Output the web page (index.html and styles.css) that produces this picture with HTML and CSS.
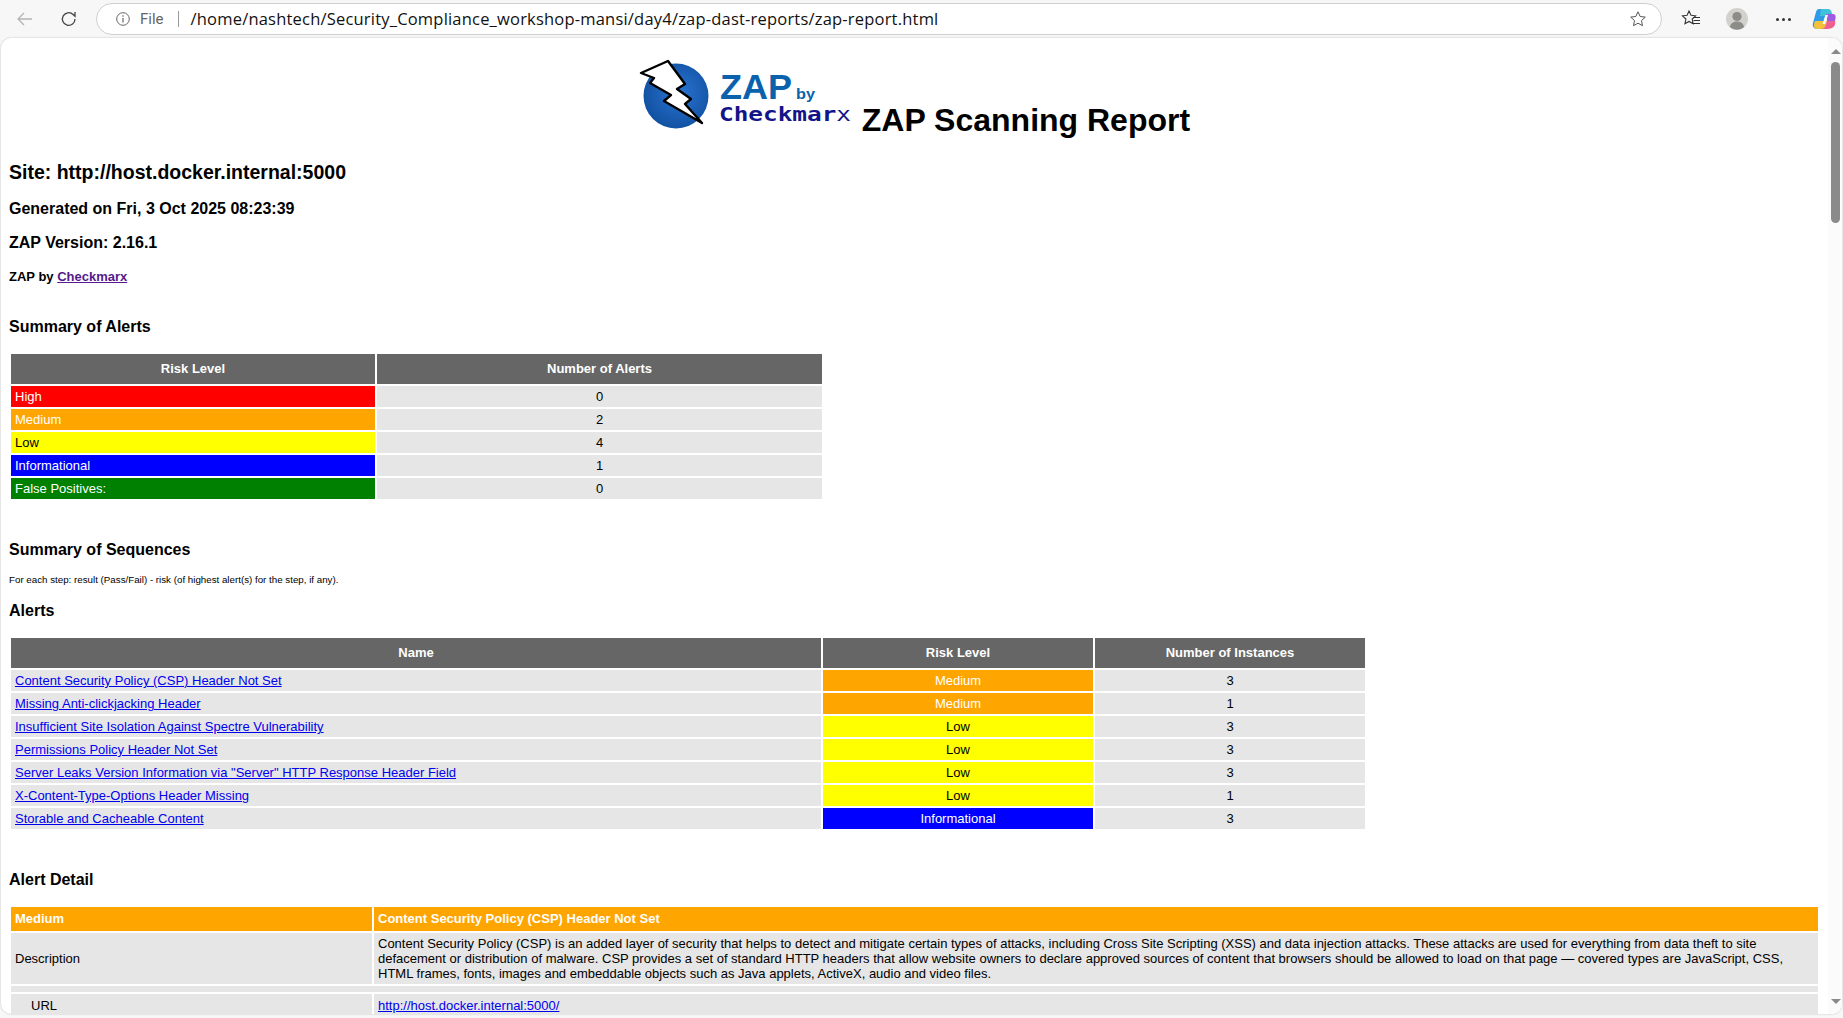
FILE: index.html
```html
<!DOCTYPE html>
<html>
<head>
	<title>ZAP Scanning Report</title>
	<link rel="stylesheet" href="styles.css">
</head>
<body>
<div class="toolbar">
  <svg class="nav-icon back" width="20" height="20" viewBox="0 0 20 20"><path d="M17 10H3M9 4l-6 6 6 6" fill="none" stroke="#b4b4b4" stroke-width="1.3"/></svg>
  <svg class="nav-icon reload" width="20" height="20" viewBox="0 0 20 20"><path d="M16 10a6.3 6.3 0 1 1-1.9-4.5L16 7.300V3" fill="none" stroke="#444" stroke-width="1.3"/></svg>
  <div class="omnibox">
    <svg width="16" height="16" viewBox="0 0 16 16"><circle cx="8" cy="8" r="6.300" fill="none" stroke="#666" stroke-width="1"/><path d="M8 7v4.500M8 4.300v1.400" stroke="#666" stroke-width="1.200"/></svg>
    <span class="scheme">File</span>
    <span class="sep"></span>
    <span class="url">/home/nashtech/Security_Compliance_workshop-mansi/day4/zap-dast-reports/zap-report.html</span>
    <svg class="star" width="18" height="18" viewBox="0 0 18 18"><path d="M9 1.800l2.200 4.700 5.100.6-3.800 3.500 1 5.100L9 13.200l-4.500 2.500 1-5.100L1.700 7.100l5.100-.6z" fill="none" stroke="#555" stroke-width="1"/></svg>
  </div>
  <svg class="tool fav" width="20" height="20" viewBox="0 0 20 20"><path d="M8 2l2 4.300 4.600.5-3.400 3.200.9 4.700L8 12.400l-4 2.300.900-4.700L1.500 6.800l4.600-.5z" fill="none" stroke="#333" stroke-width="1.100"/><path d="M12 8.500h7M12.500 11.500h6.500M11 14.500h8" stroke="#333" stroke-width="1"/></svg>
  <svg class="tool avatar" width="22" height="22" viewBox="0 0 22 22"><circle cx="11" cy="11" r="11" fill="#d2d1cc"/><circle cx="11" cy="8.500" r="4.600" fill="#8c8c88"/><path d="M3.800 19c1-4 3.800-5.600 7.200-5.600s6.200 1.600 7.200 5.600a11 11 0 0 1-14.400 0z" fill="#8c8c88"/></svg>
  <div class="dots"><i></i><i></i><i></i></div>
  <svg class="tool copilot" width="24" height="24" viewBox="0 0 24 24">
    <path d="M7 2h8l-5 20H5c-3 0-5-3-4-6l3-11c.500-2 1.500-3 3-3z" fill="#2f9be8"/>
    <path d="M9 2h7c2 0 3 1 3.500 3L21 9H8z" fill="#3fc1d8"/>
    <path d="M3 14h12l-3 8H5c-3 0-4-3-2-8z" fill="#f2c13a"/>
    <path d="M15 22H9c3 0 4-2 5-5l1-3h8c1 4-1 8-8 8z" fill="#ef5f8f"/>
    <path d="M14 7h7c3 0 3 3 2 7h-8z" fill="#a05ce0"/>
    <path d="M13.500 8h2.500l-3 9h-2.500z" fill="#fff"/>
  </svg>
</div>

<div class="viewport">
  <div class="page">
    <h1 class="title">
      <svg class="logo" width="214" height="74" viewBox="19 8 214 74">
        <defs>
          <radialGradient id="ball" cx="55%" cy="45%" r="60%">
            <stop offset="0" stop-color="#2b74d2"/>
            <stop offset="1" stop-color="#0f4f9e"/>
          </radialGradient>
        </defs>
        <circle cx="56" cy="47" r="32.500" fill="url(#ball)"/>
        <path d="M21 24L48 12l17 23-8 5 14 10-6 5 17 19-38-22 7-6-21-12 4-5z" fill="#fff" stroke="#000" stroke-width="2.400" stroke-linejoin="round"/>
        <text class="logo-zap" x="100" y="49.500" textLength="72" lengthAdjust="spacingAndGlyphs">ZAP</text>
        <text class="logo-by" x="176" y="50" textLength="19" lengthAdjust="spacingAndGlyphs">by</text>
        <text class="logo-cx" x="99" y="72" textLength="132" lengthAdjust="spacingAndGlyphs">Checkmar<tspan class="logo-x">x</tspan></text>
      </svg>
      <span>ZAP Scanning Report</span>
    </h1>

    <h2 class="site">Site: http://host.docker.internal:5000</h2>
    <h3 class="meta">Generated on Fri, 3 Oct 2025 08:23:39</h3>
    <h3 class="meta">ZAP Version: 2.16.1</h3>
    <h4 class="by">ZAP by <a class="visited" href="#">Checkmarx</a></h4>

    <h3 class="section first">Summary of Alerts</h3>
    <table class="grid summary">
      <tr><th class="col-risk">Risk Level</th><th>Number of Alerts</th></tr>
      <tr><td class="risk-high">High</td><td class="c">0</td></tr>
      <tr><td class="risk-medium">Medium</td><td class="c">2</td></tr>
      <tr><td class="risk-low">Low</td><td class="c">4</td></tr>
      <tr><td class="risk-info">Informational</td><td class="c">1</td></tr>
      <tr><td class="risk-fp">False Positives:</td><td class="c">0</td></tr>
    </table>

    <h3 class="section seq">Summary of Sequences</h3>
    <p class="note">For each step: result (Pass/Fail) - risk (of highest alert(s) for the step, if any).</p>
    <h3 class="section alerts-head">Alerts</h3>
    <table class="grid alerts">
      <tr><th class="col-name">Name</th><th class="col-level">Risk Level</th><th>Number of Instances</th></tr>
      <tr><td><a href="#">Content Security Policy (CSP) Header Not Set</a></td><td class="c risk-medium">Medium</td><td class="c">3</td></tr>
      <tr><td><a href="#">Missing Anti-clickjacking Header</a></td><td class="c risk-medium">Medium</td><td class="c">1</td></tr>
      <tr><td><a href="#">Insufficient Site Isolation Against Spectre Vulnerability</a></td><td class="c risk-low">Low</td><td class="c">3</td></tr>
      <tr><td><a href="#">Permissions Policy Header Not Set</a></td><td class="c risk-low">Low</td><td class="c">3</td></tr>
      <tr><td><a href="#">Server Leaks Version Information via "Server" HTTP Response Header Field</a></td><td class="c risk-low">Low</td><td class="c">3</td></tr>
      <tr><td><a href="#">X-Content-Type-Options Header Missing</a></td><td class="c risk-low">Low</td><td class="c">1</td></tr>
      <tr><td><a href="#">Storable and Cacheable Content</a></td><td class="c risk-info">Informational</td><td class="c">3</td></tr>
    </table>

    <h3 class="section detail-head">Alert Detail</h3>
    <table class="grid detail">
      <tr class="detail-top"><td class="col-label risk-medium">Medium</td><td class="risk-medium">Content Security Policy (CSP) Header Not Set</td></tr>
      <tr>
        <td>Description</td>
        <td class="long">Content Security Policy (CSP) is an added layer of security that helps to detect and mitigate certain types of attacks, including Cross Site Scripting (XSS) and data injection attacks. These attacks are used for everything from data theft to site defacement or distribution of malware. CSP provides a set of standard HTTP headers that allow website owners to declare approved sources of content that browsers should be allowed to load on that page — covered types are JavaScript, CSS, HTML frames, fonts, images and embeddable objects such as Java applets, ActiveX, audio and video files.</td>
      </tr>
      <tr class="spacer"><td colspan="2"></td></tr>
      <tr class="url-row"><td class="indent">URL</td><td><a href="#">http://host.docker.internal:5000/</a></td></tr>
    </table>
  </div>
  <div class="scrollbar">
    <span class="arrow up"></span>
    <span class="thumb"></span>
    <span class="arrow down"></span>
  </div>
</div>
</body>
</html>
```

FILE: styles.css
```css
html, body {
  height: 100%;
  margin: 0;
  overflow: hidden;
}

body {
  display: flex;
  flex-direction: column;
  background: #f7f7f7;
  color: #000;
  font-family: "Liberation Sans", Arial, sans-serif;
}

/* browser bar */
.toolbar {
  display: flex;
  align-items: center;
  height: 38px;
  flex: none;
}

.nav-icon { flex: none; }
.back { margin-left: 15px; }
.reload { margin-left: 24px; margin-right: 17px; }

.omnibox {
  display: flex;
  align-items: center;
  box-sizing: border-box;
  width: 1566px;
  height: 32px;
  margin-top: -1px;
  padding: 0 14px 0 18px;
  background: #fff;
  border: 1px solid #cfcfcf;
  border-radius: 16px;
}

.scheme {
  margin-left: 9px;
  font: 15px "Roboto", sans-serif;
  color: #666;
}

.sep {
  width: 1px;
  height: 16px;
  margin: 0 12px 0 14px;
  background: #999;
}

.url {
  font: 16.500px "Open Sans", sans-serif;
  letter-spacing: .2px;
  color: #111;
  white-space: nowrap;
}

.star { margin-left: auto; }

.tool { flex: none; }
.fav { margin-left: 19px; }
.avatar { margin-left: 25px; }

.dots {
  display: flex;
  gap: 3px;
  margin-left: 28px;
}

.dots i {
  width: 3px;
  height: 3px;
  border-radius: 50%;
  background: #333;
}

.copilot { margin-left: 21px; }

/* page area */
.viewport {
  display: flex;
  flex: none;
  height: 976px;
  margin: 0 1px 0 1px;
  background: #fff;
  border-radius: 10px;
  box-shadow: 0 0 2px rgba(0, 0, 0, .25);
  overflow: hidden;
}

.page {
  flex: 1;
  min-width: 0;
  padding: 0 8px;
}

.scrollbar {
  position: relative;
  flex: none;
  width: 14px;
  background: #fbfbfb;
}

.arrow {
  position: absolute;
  left: 3px;
  width: 0;
  height: 0;
  border-left: 5px solid transparent;
  border-right: 5px solid transparent;
}

.arrow.up { top: 11px; border-bottom: 5px solid #8a8a8a; }
.arrow.down { bottom: 10px; border-top: 5px solid #8a8a8a; }

.thumb {
  position: absolute;
  top: 24px;
  left: 3px;
  width: 9px;
  height: 161px;
  border-radius: 5px;
  background: #8a8a8a;
}

/* report */
.title {
  margin: 19px 0 0;
  font-size: 32px;
  line-height: 74px;
  height: 74px;
  text-align: center;
}

.logo { vertical-align: baseline; }
.logo text { font-family: "Liberation Sans", sans-serif; font-weight: bold; }
.logo-zap { font-size: 35px; fill: #0a62ac; }
.logo-by { font-size: 15px; fill: #0a62ac; }
.logo .logo-cx { font-family: "DejaVu Sans Mono", monospace; font-size: 20px; fill: #14148a; }
.logo-x { font-weight: normal; }

.site {
  margin: 30px 0 0;
  font-size: 19.500px;
  line-height: 23px;
}

.meta {
  margin: 16px 0 0;
  font-size: 16px;
  line-height: 18px;
}

.by {
  margin: 17px 0 0;
  font-size: 13px;
  line-height: 15px;
}

.visited { color: #551a8b; }

.section {
  margin: 0;
  font-size: 16px;
  line-height: 18px;
}

.first { margin-top: 34px; }
.seq { margin-top: 40px; }
.alerts-head { margin-top: 17px; }
.detail-head { margin-top: 40px; }

.note {
  margin: 15px 0 0;
  font-size: 9.750px;
  line-height: 11px;
}

.grid {
  border-spacing: 2px;
  font-size: 13px;
  line-height: 15px;
  table-layout: fixed;
}

.grid th {
  box-sizing: border-box;
  height: 30px;
  padding: 0 2px 1px;
  background: #666;
  color: #fff;
  font-weight: bold;
}

.grid td {
  height: 21px;
  padding: 0 4px;
  background: #e6e6e6;
}

.grid a { color: #0000ee; }
.c { text-align: center; }

.summary { width: 815px; margin-top: 16px; }
.col-risk { width: 364px; }

.alerts { width: 1358px; margin-top: 16px; }
.col-name { width: 810px; }
.col-level { width: 270px; }

.detail { width: 100%; margin-top: 16px; }
.col-label { width: 361px; }
.grid .detail-top td { box-sizing: border-box; height: 24px; padding-bottom: 2px; font-weight: bold; }
.long { padding: 3px 4px !important; }
.spacer td { height: 6px; padding: 0; }
.indent { padding-left: 20px !important; }
.grid .url-row td { padding-top: 1px; }

.grid .risk-high { background: #f00; color: #fff; }
.grid .risk-medium { background: #ffa500; color: #fff; }
.grid .risk-low { background: #ff0; color: #000; }
.grid .risk-info { background: #00f; color: #fff; }
.grid .risk-fp { background: #008000; color: #fff; }
```
